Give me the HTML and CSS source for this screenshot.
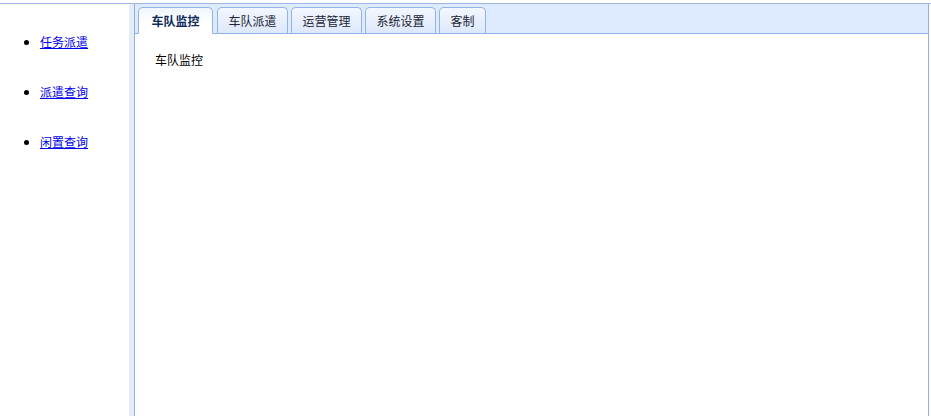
FILE: index.html
```html
<!DOCTYPE html>
<html lang="zh-CN">
<head>
<meta charset="utf-8">
<title>车队管理</title>
<link rel="stylesheet" href="styles.css">
</head>
<body>
<div class="topgap"></div>
<div class="frame">
  <aside class="side">
    <ul class="menu">
      <li><a href="#">任务派遣</a></li>
      <li><a href="#">派遣查询</a></li>
      <li><a href="#">闲置查询</a></li>
    </ul>
  </aside>
  <div class="split"></div>
  <main class="main">
    <div class="tabbar">
      <div class="tab active">车队监控</div>
      <div class="tab">车队派遣</div>
      <div class="tab">运营管理</div>
      <div class="tab">系统设置</div>
      <div class="tab short">客制</div>
    </div>
    <div class="panel">车队监控</div>
  </main>
  <div class="edge"></div>
</div>
</body>
</html>
```

FILE: styles.css
```css
html, body {
  margin: 0;
  padding: 0;
  height: 100%;
  background: #ffffff;
  font-family: "Noto Sans CJK SC", "Liberation Sans", sans-serif;
  font-size: 12px;
  color: #000;
  overflow: hidden;
}
.topgap {
  height: 3px;
}
.frame {
  display: flex;
  height: calc(100% - 3px);
  border-top: 1px solid #9db8e4;
  box-sizing: border-box;
}
.side {
  width: 129px;
  flex: none;
  background: #fff;
}
.menu {
  margin: 0;
  padding: 30px 0 0 40px;
  list-style: disc;
}
.menu li {
  height: 50px;
  line-height: 16px;
}
.menu a {
  color: #0000ee;
  text-decoration: underline;
}
.split {
  width: 5px;
  flex: none;
  background: #e4ecf6;
}
.main {
  width: 793px;
  flex: none;
  border-left: 1px solid #8eb2e6;
  border-right: 1px solid #8eb2e6;
  display: flex;
  flex-direction: column;
}
.edge {
  flex: 1;
  background: #fff;
}
.tabbar {
  height: 29px;
  background: #deeafd;
  border-bottom: 1px solid #8eb2e6;
  display: flex;
  align-items: flex-end;
  gap: 3px;
  padding-left: 3px;
}
.tab {
  box-sizing: border-box;
  flex: none;
  width: 71px;
  height: 27px;
  line-height: 26px;
  text-align: center;
  border: 1px solid #93b3e2;
  border-radius: 5px 5px 0 0;
  background: linear-gradient(#f3f7fe, #dce8fb);
  color: #1c2433;
  margin-bottom: -1px;
  border-bottom: 1px solid #8eb2e6;
  white-space: nowrap;
}
.tab.short {
  width: 47px;
}
.tab.active {
  width: 75px;
  margin-right: 1px;
  background: linear-gradient(#f0f5fd, #ffffff 60%);
  border-bottom: 1px solid #ffffff;
  color: #0f2a5c;
  font-weight: bold;
}
.panel {
  flex: 1;
  padding: 18px 0 0 20px;
  line-height: 16px;
}
```
